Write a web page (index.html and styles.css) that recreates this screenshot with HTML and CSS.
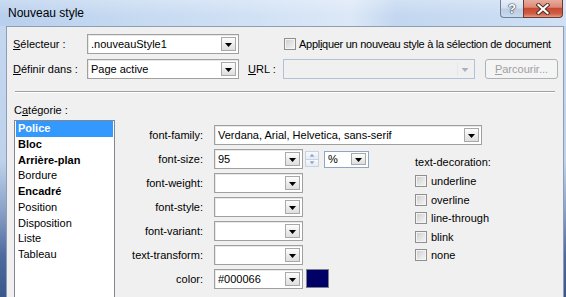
FILE: index.html
```html
<!DOCTYPE html>
<html lang="fr">
<head>
<meta charset="utf-8">
<title>Nouveau style</title>
<link rel="stylesheet" href="styles.css">
</head>
<body>
<div class="window">
  <div class="titlebar">
    <span class="title">Nouveau style</span>
    <div class="caption">
      <span class="cap help">?</span>
      <span class="cap close">
        <svg width="14" height="12" viewBox="0 0 14 12">
          <path d="M2.5 2 L11.5 10 M11.5 2 L2.5 10" stroke="#4a2a26" stroke-width="4" stroke-linecap="square"/>
          <path d="M2.5 2 L11.5 10 M11.5 2 L2.5 10" stroke="#ffffff" stroke-width="2.2" stroke-linecap="square"/>
        </svg>
      </span>
    </div>
  </div>
  <div class="frame">
    <div class="content">
      <div class="top">
        <div class="row">
          <span class="lbl"><u>S</u>électeur :</span>
          <div class="combo w152"><span class="val">.nouveauStyle1</span><span class="btn"></span></div>
          <span class="check apply"><span class="box"></span><span class="apply-txt">Appl<u>i</u>quer un nouveau style à la sélection de document</span></span>
        </div>
        <div class="row">
          <span class="lbl"><u>D</u>éfinir dans :</span>
          <div class="combo w152"><span class="val">Page active</span><span class="btn"></span></div>
          <span class="url-lbl"><u>U</u>RL :</span>
          <div class="combo url"><span class="val"></span><span class="btn"></span></div>
          <span class="browse"><u>P</u>arcourir...</span>
        </div>
      </div>
      <div class="sep"></div>
      <div class="bottom">
        <div class="cat">
          <div class="cat-lbl">C<u>a</u>tégorie :</div>
          <ul class="list">
            <li class="sel b">Police</li>
            <li class="b">Bloc</li>
            <li class="b">Arrière-plan</li>
            <li>Bordure</li>
            <li class="b">Encadré</li>
            <li>Position</li>
            <li>Disposition</li>
            <li>Liste</li>
            <li>Tableau</li>
          </ul>
        </div>
        <div class="form">
          <span class="flbl">font-family:</span>
          <div class="combo wide"><span class="val">Verdana, Arial, Helvetica, sans-serif</span><span class="btn"></span></div>

          <div class="deco">
            <span class="deco-lbl">text-decoration:</span>
            <span class="check first"><span class="box"></span>underline</span>
            <span class="check"><span class="box"></span>overline</span>
            <span class="check"><span class="box"></span>line-through</span>
            <span class="check"><span class="box"></span>blink</span>
            <span class="check"><span class="box"></span>none</span>
          </div>

          <span class="flbl">font-size:</span>
          <div class="ctl">
            <div class="combo w89"><span class="val">95</span><span class="btn"></span></div>
            <div class="spin"><span class="sp up"></span><span class="sp down"></span></div>
            <div class="combo unit"><span class="val">%</span><span class="btn"></span></div>
          </div>

          <span class="flbl">font-weight:</span>
          <div class="ctl"><div class="combo w89"><span class="val"></span><span class="btn"></span></div></div>

          <span class="flbl">font-style:</span>
          <div class="ctl"><div class="combo w89"><span class="val"></span><span class="btn"></span></div></div>

          <span class="flbl">font-variant:</span>
          <div class="ctl"><div class="combo w89"><span class="val"></span><span class="btn"></span></div></div>

          <span class="flbl">text-transform:</span>
          <div class="ctl"><div class="combo w89"><span class="val"></span><span class="btn"></span></div></div>

          <span class="flbl">color:</span>
          <div class="ctl">
            <div class="combo w89"><span class="val">#000066</span><span class="btn"></span></div>
            <span class="swatch"></span>
          </div>
        </div>
      </div>
    </div>
  </div>
</div>
</body>
</html>
```
FILE: styles.css
```css
html, body {
  margin: 0;
  padding: 0;
}
body {
  width: 566px;
  height: 297px;
  overflow: hidden;
  font: 11px "Liberation Sans", Arial, sans-serif;
  color: #000;
  background: #f0f0f0;
}
u { text-decoration: underline; }

.window {
  display: flex;
  flex-direction: column;
  height: 297px;
}

/* title bar */
.titlebar {
  flex: none;
  height: 26px;
  display: flex;
  justify-content: space-between;
  background:
    linear-gradient(180deg, rgba(255,255,255,0.25), rgba(255,255,255,0) 60%),
    linear-gradient(90deg, #b8cfed 0%, #c5d9f1 22%, #d1e1f5 45%, #dce8f7 62%, #c3d7f0 70%, #c8dbf2 85%, #d0e1f5 100%);
}
.title {
  font-size: 12px;
  line-height: 26px;
  padding-left: 8px;
  color: #000;
}
.caption {
  display: flex;
  align-self: flex-start;
  margin-right: 3px;
}
.cap {
  box-sizing: border-box;
  height: 18px;
  display: flex;
  align-items: center;
  justify-content: center;
}
.help {
  width: 23px;
  border: 1px solid #6f809a;
  border-top: 0;
  border-right: 0;
  border-radius: 0 0 0 4px;
  background: linear-gradient(180deg, #e6eef8 0%, #d3e0f0 48%, #bccde4 52%, #c9d9ee 100%);
  color: #fff;
  font: bold 13px "Liberation Sans", Arial, sans-serif;
  text-shadow: 0 0 1px #2c3a4c, 0 0 1px #2c3a4c, 0 0 2px #44556b;
}
.close {
  width: 40px;
  border: 1px solid #6b3b34;
  border-top: 0;
  border-radius: 0 0 4px 0;
  background: linear-gradient(180deg, #e8ab9c 0%, #dc8a78 42%, #c84a33 50%, #cf5d43 80%, #e39a80 100%);
}

/* frame and content */
.frame {
  flex: 1;
  min-height: 0;
  display: flex;
  padding: 0 2px 0 6px;
  background: linear-gradient(180deg, #c4d7ef 0%, #bed2ec 50%, #8aa2c8 68%, #4c6a9e 85%, #3a578c 100%);
}
.content {
  flex: 1;
  min-width: 0;
  display: flex;
  flex-direction: column;
  overflow: hidden;
  background: #f0f0f0;
  border: 1px solid #8e9db1;
  border-bottom: 0;
}

.top {
  padding: 7px 0 0 6px;
  display: flex;
  flex-direction: column;
  gap: 5px;
}
.row {
  display: flex;
  align-items: center;
  height: 20px;
}
.lbl {
  flex: none;
  width: 74px;
  white-space: nowrap;
}

/* combo boxes */
.combo {
  flex: none;
  box-sizing: border-box;
  height: 20px;
  display: flex;
  align-items: center;
  padding-left: 3px;
  background: #fff;
  border: 1px solid #a0a0a0;
  box-shadow: inset 1px 1px 0 #e8e8e8;
}
.val {
  flex: 1;
  min-width: 0;
  white-space: nowrap;
  overflow: hidden;
}
.btn {
  flex: none;
  box-sizing: border-box;
  width: 15px;
  height: 14px;
  margin-right: 2px;
  display: flex;
  align-items: center;
  justify-content: center;
  border: 1px solid #a9a9a9;
  background: linear-gradient(180deg, #fdfdfd 0%, #ececec 55%, #dedede 100%);
}
.btn::after {
  content: "";
  width: 7px;
  height: 4px;
  margin-top: 2px;
  background: #000;
  clip-path: polygon(0 0, 100% 0, 50% 100%);
}
.w152 { width: 152px; }
.w89 { width: 89px; }
.wide { width: 268px; grid-column: 2 / 4; }

.url {
  width: 192px;
  background: #f0f0f0;
  border-color: #b2c2d6;
  box-shadow: none;
}
.url .btn {
  border: 1px solid #e2e7ee;
  border-width: 0 0 0 1px;
  background: transparent;
}
.url .btn::after {
  background: #a9b2bd;
}

.url-lbl {
  flex: none;
  width: 35px;
  margin-left: 9px;
}
.browse {
  flex: none;
  box-sizing: border-box;
  width: 73px;
  height: 20px;
  margin-left: 10px;
  display: flex;
  align-items: center;
  justify-content: center;
  border: 1px solid #adb2b5;
  border-radius: 3px;
  background: #f4f4f4;
  color: #a0a0a0;
}

/* checkboxes */
.check {
  display: flex;
  align-items: center;
  white-space: nowrap;
}
.box {
  flex: none;
  box-sizing: border-box;
  width: 12px;
  height: 12px;
  margin-right: 3px;
  border: 1px solid #8e8f8f;
  background: linear-gradient(135deg, #cbcbcb 0%, #e2e2e2 50%, #f6f6f6 100%);
  box-shadow: inset 0 0 0 1px #f4f4f4;
}
.apply { margin-left: 45px; }
.apply-txt { letter-spacing: -0.28px; }

/* separator */
.sep {
  margin: 12px 8px 0 8px;
  border-top: 1px solid #a2a2a2;
  border-bottom: 1px solid #ffffff;
}

/* bottom area */
.bottom {
  display: flex;
  padding-left: 7px;
}
.cat {
  flex: none;
  width: 101px;
  display: flex;
  flex-direction: column;
}
.cat-lbl {
  line-height: 13px;
  margin-top: 11px;
}
.list {
  margin: 3px 0 0;
  padding: 0 1px;
  list-style: none;
  height: 200px;
  background: #fff;
  border: 1px solid #828790;
  box-sizing: border-box;
}
.list li {
  line-height: 15.75px;
  padding-left: 2px;
  white-space: nowrap;
}
.list li.b { font-weight: bold; }
.list li.sel {
  background: #3399ff;
  color: #fff;
}

/* form grid */
.form {
  margin: 32px 0 0 5px;
  display: grid;
  grid-template-columns: 83px 190px auto;
  grid-auto-rows: 20px;
  column-gap: 11px;
  row-gap: 4px;
  align-content: start;
}
.flbl {
  grid-column: 1;
  text-align: right;
  align-self: center;
  white-space: nowrap;
}
.ctl {
  grid-column: 2;
  display: flex;
  align-items: center;
}
.combo.wide { align-self: stretch; }

.spin {
  flex: none;
  width: 14px;
  height: 16px;
  margin-left: 2px;
  display: flex;
  flex-direction: column;
}
.sp {
  flex: 1;
  box-sizing: border-box;
  display: flex;
  align-items: center;
  justify-content: center;
  border: 1px solid #c9d3df;
  background: linear-gradient(180deg, #f7f9fc, #e6ecf3);
}
.sp.down { border-top: 0; }
.sp::after {
  content: "";
  width: 5px;
  height: 3px;
  background: #90a8c6;
}
.sp.up::after { clip-path: polygon(50% 0, 100% 100%, 0 100%); }
.sp.down::after { clip-path: polygon(0 0, 100% 0, 50% 100%); }

.unit {
  width: 45px;
  height: 17px;
  margin-left: 5px;
  border-color: #8ea6c6;
  box-shadow: none;
}
.unit .btn {
  height: 12px;
  margin-right: 2px;
}

.swatch {
  flex: none;
  align-self: flex-start;
  box-sizing: border-box;
  width: 23px;
  height: 19px;
  margin-left: 3px;
  background: #000066;
  border: 1px solid #7a7f88;
}

.deco {
  grid-column: 3;
  grid-row: 2 / 8;
  padding-top: 7px;
  display: flex;
  flex-direction: column;
}
.deco-lbl {
  line-height: 13px;
  white-space: nowrap;
}
.deco .check {
  height: 18.5px;
}
.deco .check .box { margin-right: 4px; }
.deco .check.first { margin-top: 3px; }
```
